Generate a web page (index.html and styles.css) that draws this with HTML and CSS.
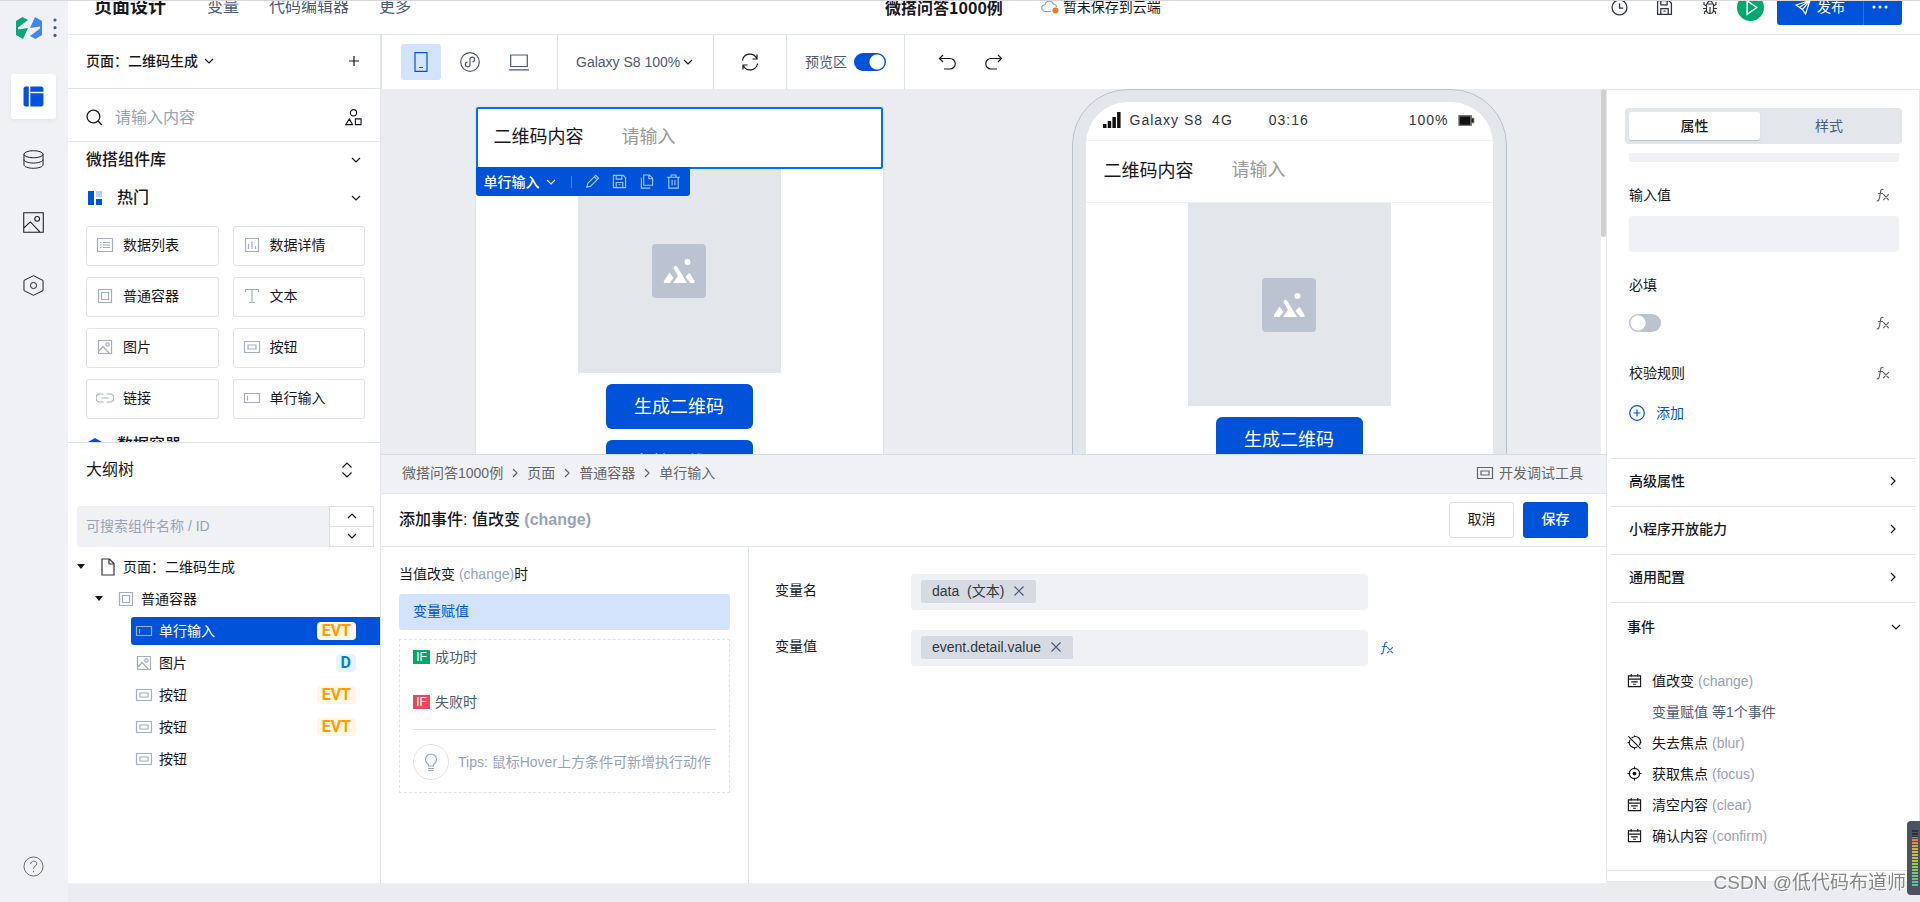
FILE: index.html
```html
<!DOCTYPE html>
<html lang="zh-CN">
<head>
<meta charset="utf-8">
<title>页面设计</title>
<link rel="stylesheet" href="styles.css">
</head>
<body>
<svg class="sprite" aria-hidden="true">
  <symbol id="i-down" viewBox="0 0 10 10"><path d="M1 3l4 4 4-4"/></symbol>
  <symbol id="i-up" viewBox="0 0 10 10"><path d="M1 7l4-4 4 4"/></symbol>
  <symbol id="i-right" viewBox="0 0 10 10"><path d="M3 1l4 4-4 4"/></symbol>
  <symbol id="i-close" viewBox="0 0 12 12"><path d="M1.500 1.500l9 9M10.500 1.500l-9 9"/></symbol>
  <symbol id="i-list" viewBox="0 0 18 16"><path d="M1.500 1.500h15v13h-15zM4 5.500h1.500M4 8h1.500M4 10.500h1.500M7 5.500h7M7 8h7M7 10.500h7"/></symbol>
  <symbol id="i-chart" viewBox="0 0 18 16"><path d="M2.500 1.500h13v13h-13zM5.500 7v5M9 4.500V12M12.500 9v3"/></symbol>
  <symbol id="i-box" viewBox="0 0 18 16"><path d="M2.500 1.500h13v13h-13zM5.500 4.500h7v7h-7z"/></symbol>
  <symbol id="i-text" viewBox="0 0 18 16"><path d="M2.500 4V1.500h13V4M9 1.500v13M6 14.500h6"/></symbol>
  <symbol id="i-image" viewBox="0 0 18 16"><path d="M2.500 1.500h13v13h-13zM3 12l4-4.500 6.500 7"/><circle cx="11.500" cy="5.500" r="1.700"/></symbol>
  <symbol id="i-button" viewBox="0 0 18 16"><path d="M1.500 2.500h15v11h-15zM5 6h8v4H5z"/></symbol>
  <symbol id="i-link" viewBox="0 0 18 16"><path d="M7.500 4H4a4 4 0 000 8h3.500M10.500 4H14a4 4 0 010 8h-3.500M5.500 8h7"/></symbol>
  <symbol id="i-input" viewBox="0 0 18 16"><path d="M1.500 3.500h15v9h-15zM4.500 6v4.500"/></symbol>
  <symbol id="i-fx" viewBox="0 0 14 14"><path d="M7.500 1.600C5.800.8 5 1.500 4.700 3.200L3.300 10.500C3 12.400 2.300 13.200.8 12.600M2 5.500h5M7.200 6.200l5.600 6M12.800 6.200l-5.600 6"/></symbol>
  <symbol id="i-floppy" viewBox="0 0 16 16"><path d="M1.500 1.500h10.500l2.500 2.500v10.500h-13zM4.500 1.500v4h6v-4M4.500 14.500V9h7v5.500M7 11.500h2"/></symbol>
  <symbol id="i-calendar" viewBox="0 0 16 16"><path d="M1.500 3h13v11.500h-13zM1.500 6.500h13M4.500 1v3M11.500 1v3M4.500 9.500h7M6.500 12h3"/></symbol>
  <symbol id="i-focus" viewBox="0 0 16 16"><circle cx="8" cy="8" r="5.500"/><path d="M8 .5v3M8 12.500v3M.5 8h3M12.500 8h3"/><circle class="solid" cx="8" cy="8" r="2"/></symbol>
  <symbol id="i-blur" viewBox="0 0 16 16"><path d="M5 3.200a5.500 5.500 0 017.800 7.800M11 12.600A5.500 5.500 0 013.400 5M8 .5v2M8 13.500v2M.5 8h2M13.500 8h2M1.500 1.500l13 13"/></symbol>
  <symbol id="i-picture" viewBox="0 0 54 54"><rect class="tile" width="54" height="54" rx="4"/><g class="white"><circle cx="35.500" cy="18" r="3"/><path d="M22 22.500q1.500-1.500 3 0L35 39H21l5-7-4.500-8zM17.500 28.500l4 5.500-4 5h-5q-1.500-.5-.500-2zM33.500 33l3-3.500q.8-.8 1.500 0l4.500 7.500q.5 2-1 2h-3z"/></g></symbol>
</svg>

<div class="app">
  <nav class="rail" aria-label="主导航">
    <div class="rail-top">
      <svg class="logo" viewBox="0 0 26 22"><path fill="#07a876" d="M6.500 0L12 3 2 10.500v2L12 11 7 22 0 18V4z"/><path fill="#4285ee" d="M19.500 22L14 19l10-7.500v-2L14 11l5-11 7 4v14z"/></svg>
      <svg class="dots" viewBox="0 0 4 20"><circle cx="2" cy="2" r="1.600"/><circle cx="2" cy="9.700" r="1.600"/><circle cx="2" cy="17.400" r="1.600"/></svg>
    </div>
    <button class="rail-item active" aria-label="页面"><svg viewBox="0 0 20 20"><path class="solid" d="M2 .5h3.500v19H2L.5 18V2zM7 .5h11L19.500 2v3.500H7zM7 7h12.500v11L18 19.500H7z"/></svg></button>
    <button class="rail-item" aria-label="数据源"><svg viewBox="0 0 22 20"><ellipse cx="11" cy="4.500" rx="10" ry="3.700"/><path d="M1 4.500v11c0 2 4.500 3.700 10 3.700s10-1.700 10-3.700v-11M1 10c0 2 4.500 3.700 10 3.700S21 12 21 10"/></svg></button>
    <button class="rail-item" aria-label="素材"><svg viewBox="0 0 20 20"><path d="M.7.700h18.600v18.600H.7zM1 15l6-5.500 9 9.500"/><circle cx="13.500" cy="6.500" r="2.300"/></svg></button>
    <button class="rail-item" aria-label="设置"><svg viewBox="0 0 22 22"><path d="M11 .7l10 5v10.600l-10 5-10-5V5.700z"/><circle cx="11" cy="11" r="3.200"/></svg></button>
    <button class="rail-item help" aria-label="帮助"><svg viewBox="0 0 22 22"><circle cx="11" cy="11" r="10"/><path d="M8 8.500c0-4 6.500-4 6.500-.5 0 2.500-3.500 2.500-3.500 5.500M11 15.500v1.500"/></svg></button>
  </nav>

  <div class="main">
    <header class="topbar">
      <div class="topbar-row">
        <nav class="top-nav"><a class="current" href="#">页面设计</a><a href="#">变量</a><a href="#">代码编辑器</a><a href="#">更多</a></nav>
        <div class="top-title"><strong>微搭问答1000例</strong>
          <span class="save-state"><svg viewBox="0 0 18 14"><path d="M10 11.500H4.500a3.500 3.500 0 01-.5-7 4.500 4.500 0 018.500-.5q3 .5 3 3"/><circle cx="14.500" cy="10.500" r="3"/></svg>暂未保存到云端</span></div>
        <div class="top-actions">
          <button aria-label="历史"><svg viewBox="0 0 16 16"><circle cx="8" cy="8" r="7"/><path d="M8 4v4.500h3.500"/></svg></button>
          <button aria-label="保存"><svg><use href="#i-floppy"/></svg></button>
          <button aria-label="调试"><svg class="bug" viewBox="0 0 16 16"><path d="M4.500 5h7v6q0 3.500-3.500 3.500T4.500 11zM5.500 5q0-3 2.500-3t2.500 3M8 8v6M2 3v2.500l2.500 1.500M14 3v2.500L11.500 7M1 9.500h3.500M11.500 9.500H15M2.500 15v-2l2-1.500M13.500 15v-2l-2-1.500"/></svg></button>
          <button class="run" aria-label="预览"><svg viewBox="0 0 28 28"><path d="M10.500 7v14l10-7z"/></svg></button>
          <div class="publish"><button><svg viewBox="0 0 16 16"><path d="M1 6l14-4.500L10.500 15l-3-4.500zM7.500 10.500L15 1.500 4 8.500"/></svg>发布</button><button class="more" aria-label="更多操作"><svg viewBox="0 0 16 4"><circle cx="2" cy="2" r="1.500"/><circle cx="8" cy="2" r="1.500"/><circle cx="14" cy="2" r="1.500"/></svg></button></div>
        </div>
      </div>
    </header>

    <div class="editor">
      <aside class="left">
        <div class="page-head"><button class="page-pick">页面：二维码生成<svg class="chev"><use href="#i-down"/></svg></button><button aria-label="新建"><svg class="plus" viewBox="0 0 12 12"><path d="M6 1v10M1 6h10"/></svg></button></div>
        <section class="library">
          <div class="lib-search"><svg viewBox="0 0 16 16"><circle cx="7" cy="7" r="6"/><path d="M11.500 11.500L15 15"/></svg><input type="text" aria-label="搜索组件" placeholder="请输入内容"><svg viewBox="0 0 18 18"><circle cx="9" cy="4" r="3.300"/><path d="M4.500 10.500l-3.500 6h7zM11 10.500h6v6h-6z"/></svg></div>
          <div class="lib-title"><span>微搭组件库</span><svg class="chev"><use href="#i-down"/></svg></div>
          <div class="lib-title group"><svg class="hot" viewBox="0 0 14 14"><path fill="#0052d9" d="M0 0h6v14H0zM8 8h6v6H8z"/><path fill="#bbd3fb" d="M8 0h6v6H8z"/></svg><span>热门</span><svg class="chev"><use href="#i-down"/></svg></div>
          <div class="comp-grid">
            <button><svg><use href="#i-list"/></svg>数据列表</button><button><svg><use href="#i-chart"/></svg>数据详情</button>
            <button><svg><use href="#i-box"/></svg>普通容器</button><button><svg><use href="#i-text"/></svg>文本</button>
            <button><svg><use href="#i-image"/></svg>图片</button><button><svg><use href="#i-button"/></svg>按钮</button>
            <button><svg><use href="#i-link"/></svg>链接</button><button><svg><use href="#i-input"/></svg>单行输入</button>
          </div>
          <div class="lib-title group next"><svg class="hot" viewBox="0 0 14 14"><path fill="#0052d9" d="M7 0l7 4v6l-7 4-7-4V4z"/></svg><span>数据容器</span></div>
        </section>
        <section class="outline">
          <div class="outline-head"><span>大纲树</span><svg viewBox="0 0 12 16"><path d="M1.500 5.500L6 1l4.500 4.500M1.500 10.500L6 15l4.500-4.500"/></svg></div>
          <div class="outline-search"><input type="text" aria-label="搜索大纲树" placeholder="可搜索组件名称 / ID"><div class="stepper"><button aria-label="上一个"><svg class="chev"><use href="#i-up"/></svg></button><button aria-label="下一个"><svg class="chev"><use href="#i-down"/></svg></button></div></div>
          <ul class="tree">
            <li><i class="caret"></i><svg class="file" viewBox="0 0 18 18"><path d="M3 1h7.500L15 5.500V17H3zM10 1v5h5"/></svg>页面：二维码生成</li>
            <li class="l1"><i class="caret"></i><svg><use href="#i-box"/></svg>普通容器</li>
            <li class="l2 selected"><svg><use href="#i-input"/></svg>单行输入<b class="evt">EVT</b></li>
            <li class="l2"><svg><use href="#i-image"/></svg>图片<b class="data">D</b></li>
            <li class="l2"><svg><use href="#i-button"/></svg>按钮<b class="evt">EVT</b></li>
            <li class="l2"><svg><use href="#i-button"/></svg>按钮<b class="evt">EVT</b></li>
            <li class="l2"><svg><use href="#i-button"/></svg>按钮</li>
          </ul>
        </section>
      </aside>

      <div class="work">
        <div class="toolbar">
          <div class="tool-group devices">
            <button class="on" aria-label="手机"><svg viewBox="0 0 20 20"><path d="M4 .7h12v18.600H4zM8 15.500h4"/></svg></button>
            <button aria-label="小程序"><svg viewBox="0 0 20 20"><circle cx="10" cy="10" r="9.300"/><path d="M7.500 10.200a2.300 2.300 0 102.500 2.500V7.300a2.300 2.300 0 112.500 2.500"/></svg></button>
            <button aria-label="电脑"><svg viewBox="0 0 20 20"><path d="M1.700 3h16.600v11.500H1.700zM0 17.800h20"/></svg></button>
          </div>
          <div class="tool-group"><button class="zoom">Galaxy S8 100%<svg class="chev"><use href="#i-down"/></svg></button></div>
          <div class="tool-group reload"><button aria-label="刷新"><svg viewBox="0 0 18 18"><path d="M1.500 7.500a7.500 7.500 0 0114-2.500M16.500 10.500a7.500 7.500 0 01-14 2.500M16 1.500V6h-4.500M2 16.500V12h4.500"/></svg></button></div>
          <label class="tool-group preview">预览区<input class="switch" type="checkbox" checked></label>
          <div class="tool-group history"><button aria-label="撤销"><svg viewBox="0 0 18 18"><path d="M5 2L1.500 5.500 5 9M1.500 5.500H12a5 5 0 010 10.500H6"/></svg></button><button aria-label="重做"><svg viewBox="0 0 18 18"><path d="M13 2l3.500 3.500L13 9M16.500 5.500H6a5 5 0 000 10.500h6"/></svg></button></div>
        </div>
        <div class="center">
          <div class="canvas">
            <div class="sheet">
              <div class="field-row picked"><label for="qr-edit">二维码内容</label><input id="qr-edit" type="text" placeholder="请输入">
                <div class="pick-bar"><button class="name">单行输入<svg class="chev"><use href="#i-down"/></svg></button><i></i>
                  <button aria-label="编辑"><svg viewBox="0 0 16 16"><path d="M2 14l1-4L11.500 1.500l3 3L6 13zM10 3l3 3"/></svg></button><button aria-label="存为模板"><svg><use href="#i-floppy"/></svg></button><button aria-label="复制"><svg viewBox="0 0 16 16"><path d="M5 1h6l3.500 3.500V12H5zM10.500 1v4h4M2.500 4v11H12"/></svg></button><button aria-label="删除"><svg viewBox="0 0 16 16"><path d="M1 3.500h14M5.500 3V1h5v2M3 3.500V15h10V3.500M6.500 6.500V12M9.500 6.500V12"/></svg></button></div>
              </div>
              <div class="photo"><svg><use href="#i-picture"/></svg></div>
              <button class="cta">生成二维码</button>
              <button class="cta">存储二维码</button>
            </div>
            <div class="phone"><div class="screen">
              <div class="status"><svg class="signal" viewBox="0 0 18 16"><path d="M0 12h3.500v4H0zM4.700 9h3.500v7H4.700zM9.400 5h3.500v11H9.400zM14.100 0h3.500v16h-3.500z"/></svg><span>Galaxy S8</span><span>4G</span><span class="time">03:16</span><span class="pct">100%</span><svg class="battery" viewBox="0 0 18 12"><path fill="#777" d="M0 0h15v3h2.500v6H15v3H0z"/><path d="M1.500 1.500h11.500v9H1.500zM14.500 4h2v4h-2z"/></svg></div>
              <div class="field-row"><label for="qr-view">二维码内容</label><input id="qr-view" type="text" placeholder="请输入"></div>
              <div class="photo"><svg><use href="#i-picture"/></svg></div>
              <button class="cta">生成二维码</button>
            </div></div>
            <div class="scroll"><i></i></div>
          </div>

          <section class="events">
            <div class="crumbs"><a href="#">微搭问答1000例</a><svg class="chev"><use href="#i-right"/></svg><a href="#">页面</a><svg class="chev"><use href="#i-right"/></svg><a href="#">普通容器</a><svg class="chev"><use href="#i-right"/></svg><a href="#">单行输入</a><button class="devtool"><svg><use href="#i-button"/></svg>开发调试工具</button></div>
            <div class="event-head"><h2>添加事件: 值改变 <span>(change)</span></h2><button class="btn">取消</button><button class="btn primary">保存</button></div>
            <div class="event-body">
              <div class="flow">
                <p>当值改变 <span>(change)</span>时</p>
                <button class="step">变量赋值</button>
                <div class="branches">
                  <div class="branch"><b>IF</b>成功时</div>
                  <div class="branch fail"><b>IF</b>失败时</div>
                  <div class="tips"><span class="bulb"><svg viewBox="0 0 16 18"><path d="M5.500 13v-1.500Q2.500 9.500 2.500 6.500a5.500 5.500 0 0111 0q0 3-3 5V13zM5 15.500h6M5.500 17.500h5"/></svg></span>Tips: 鼠标Hover上方条件可新增执行动作</div>
                </div>
              </div>
              <div class="form">
                <div class="form-row"><span>变量名</span><div class="tagbox"><div class="tag">data&nbsp; (文本)<button aria-label="移除"><svg><use href="#i-close"/></svg></button></div></div></div>
                <div class="form-row"><span>变量值</span><div class="tagbox"><div class="tag">event.detail.value<button aria-label="移除"><svg><use href="#i-close"/></svg></button></div></div><button class="fx blue" aria-label="表达式"><svg><use href="#i-fx"/></svg></button></div>
              </div>
            </div>
          </section>
        </div>
      </div>

      <aside class="props">
        <div class="tabs" role="tablist"><button class="on" role="tab" aria-selected="true">属性</button><button role="tab" aria-selected="false">样式</button></div>
        <div class="props-body">
          <div class="stub"></div>
          <div class="prop"><label for="val">输入值</label><button class="fx" aria-label="表达式"><svg><use href="#i-fx"/></svg></button></div>
          <input id="val" class="value" type="text">
          <div class="prop req"><label for="need">必填</label></div>
          <div class="prop toggle"><input id="need" class="switch" type="checkbox"><button class="fx" aria-label="表达式"><svg><use href="#i-fx"/></svg></button></div>
          <div class="prop rule"><span>校验规则</span><button class="fx" aria-label="表达式"><svg><use href="#i-fx"/></svg></button></div>
          <button class="add"><svg viewBox="0 0 16 16"><circle cx="8" cy="8" r="7.300"/><path d="M8 4.500v7M4.500 8h7"/></svg>添加</button>
        </div>
        <button class="fold">高级属性<svg class="chev"><use href="#i-right"/></svg></button>
        <button class="fold">小程序开放能力<svg class="chev"><use href="#i-right"/></svg></button>
        <button class="fold">通用配置<svg class="chev"><use href="#i-right"/></svg></button>
        <button class="fold open">事件<svg class="chev"><use href="#i-down"/></svg></button>
        <ul class="event-list">
          <li><svg><use href="#i-calendar"/></svg>值改变 <span>(change)</span></li>
          <li class="sub">变量赋值 等1个事件</li>
          <li><svg><use href="#i-blur"/></svg>失去焦点 <span>(blur)</span></li>
          <li><svg><use href="#i-focus"/></svg>获取焦点 <span>(focus)</span></li>
          <li><svg><use href="#i-calendar"/></svg>清空内容 <span>(clear)</span></li>
          <li><svg><use href="#i-calendar"/></svg>确认内容 <span>(confirm)</span></li>
        </ul>
      </aside>
    </div>
  </div>
</div>
<div class="watermark">CSDN @低代码布道师</div>
<div class="meter"><i></i></div>
</body>
</html>
```
FILE: styles.css
```css
* { box-sizing: border-box; }
body { margin: 0; color: #16181d; background: #ebecf0; font: 14px/20px "Liberation Sans", "Noto Sans CJK SC", sans-serif; }
button { display: flex; align-items: center; justify-content: center; margin: 0; padding: 0; border: 0; background: none; color: inherit; font: inherit; white-space: nowrap; }
input { min-width: 0; margin: 0; padding: 0; border: 0; background: none; color: inherit; font: inherit; }
input::placeholder { color: #97a3b7; opacity: 1; }
a { color: inherit; text-decoration: none; }
ul { margin: 0; padding: 0; list-style: none; }
svg { flex: none; fill: none; stroke: currentColor; stroke-width: 1.2; }
.solid { fill: currentColor; stroke: none; }
.sprite { position: absolute; width: 0; height: 0; }
.chev { width: 10px; height: 10px; stroke-width: 1.2; }

.app { display: grid; grid-template-columns: 68px minmax(0, 1fr); height: 100vh; overflow: hidden; border-top: 1px solid #d8d9dc; }

.rail { display: flex; flex-direction: column; align-items: center; gap: 18px; padding: 15px 2px 13px 0; background: #f0f1f5; }
.rail-top { display: flex; align-items: center; gap: 11px; height: 24px; margin: 0 0 16px 6px; }
.logo { width: 26px; height: 22px; stroke: none; }
.dots { width: 4px; height: 20px; fill: #4b5b76; stroke: none; }
.rail-item { width: 45px; height: 45px; border-radius: 3px; }
.rail-item svg { width: 21px; height: 21px; stroke-width: 1; }
.rail-item.active { background: #fff; color: #0052d9; box-shadow: 0 2px 4px #0000000d; }
.rail-item.help { margin-top: auto; color: #666; }

.main { display: flex; flex-direction: column; min-width: 0; min-height: 0; padding-bottom: 19px; }
.topbar { display: flex; align-items: flex-end; height: 34px; overflow: hidden; background: #fff; border-bottom: 1px solid #e3e6eb; }
.topbar-row { display: grid; grid-template-columns: 1fr auto 1fr; align-items: center; flex: 1; height: 54px; padding: 0 18px 0 26px; }
.top-nav { display: flex; align-items: center; gap: 30px; color: #4b5b76; font-size: 16px; }
.top-nav .current { margin-right: 11px; color: #16181d; font-size: 18px; font-weight: bold; }
.top-title { display: flex; align-items: center; gap: 38px; padding-left: 50px; font-size: 16px; }
.top-title strong { font-family: "Noto Sans CJK SC", sans-serif; }
.save-state { display: flex; align-items: center; gap: 4px; font-size: 14px; }
.save-state svg { width: 18px; height: 14px; stroke: #97a3b7; }
.save-state circle { fill: #ed7b2f; stroke: none; }
.top-actions { display: flex; align-items: center; justify-content: flex-end; color: #33363d; }
.top-actions > button { width: 45px; }
.top-actions > button svg { width: 17px; height: 17px; }
.top-actions > button .bug { width: 16px; height: 16px; }
.top-actions > .run { width: 27px; height: 27px; margin: 0 13px 0 5px; border-radius: 50%; background: #00a870; color: #fff; }
.top-actions > .run svg { width: 27px; height: 27px; stroke-width: 1.5; }
.publish { display: flex; height: 36px; border-radius: 3px; background: #0052d9; color: #fff; }
.publish button { width: 86px; gap: 6px; }
.publish svg { width: 16px; height: 16px; }
.publish .more { width: 39px; padding-right: 6px; border-left: 1px solid #2a6de0; }
.publish .more svg { height: 4px; fill: #fff; stroke: none; }

.editor { display: grid; grid-template-columns: 313px minmax(0, 1fr) 314px; grid-template-rows: 54px minmax(0, 1fr); flex: 1; min-height: 0; }
.left { grid-row: 1 / 3; display: flex; flex-direction: column; min-height: 0; background: #fff; border-right: 1px solid #e3e6eb; }
.work { display: contents; }
.toolbar { grid-column: 2 / 4; display: flex; background: #fff; border-left: 1px solid #dcdfe6; }
.center { display: flex; flex-direction: column; min-width: 0; min-height: 0; }

.page-head { display: flex; align-items: center; justify-content: space-between; flex: none; height: 54px; padding: 0 20px 2px 18px; border-bottom: 1px solid #dfe2e8; }
.page-pick { gap: 6px; font-weight: 500; }
.plus { width: 12px; height: 12px; }
.library { flex: 353 1 0; min-height: 0; overflow: hidden; }
.lib-search { display: flex; align-items: center; gap: 12px; height: 53px; padding: 5px 18px 0; border-bottom: 1px solid #e3e6eb; font-size: 16px; }
.lib-search svg { width: 17px; height: 17px; }
.lib-search input { flex: 1; height: 26px; }
.lib-title { display: flex; align-items: center; justify-content: space-between; height: 36px; padding: 0 19px 0 18px; font-size: 16px; font-weight: 500; }
.group { height: 40px; }
.hot { width: 14px; height: 14px; margin: 0 15px 0 2px; stroke: none; }
.group span { flex: 1; }
.next { margin-top: 6px; }
.comp-grid { display: grid; grid-template-columns: 1fr 1fr; gap: 11px 14px; padding: 8px 15px 0 18px; }
.comp-grid button { justify-content: flex-start; gap: 9px; height: 40px; padding: 0 9px 2px; border: 1px solid #e0e3e9; border-radius: 3px; }
.comp-grid svg, .tree svg { width: 18px; height: 16px; color: #a3aec1; }
.outline { flex: 441 1 0; min-height: 0; border-top: 1px solid #dfe2e8; }
.outline-head { display: flex; align-items: center; justify-content: space-between; height: 55px; padding: 0 27px 0 18px; font-size: 16px; }
.outline-head svg { width: 12px; height: 16px; }
.outline-search { display: flex; height: 41px; margin: 8px 6px 0 9px; }
.outline-search input { flex: 1; padding: 0 9px; border-radius: 3px 0 0 3px; background: #f0f1f5; }
.stepper { display: grid; grid-template-rows: 1fr 1fr; width: 45px; border: 1px solid #dcdfe6; }
.stepper button + button { border-top: 1px solid #dcdfe6; }
.tree { display: grid; gap: 4px; padding-top: 6px; }
.tree li { display: flex; align-items: center; gap: 6px; height: 28px; padding-left: 9px; }
.tree .l1 { padding-left: 27px; }
.tree .l2 { margin-left: 63px; padding: 0 24px 0 4px; }
.tree .selected { border-radius: 3px 0 0 3px; background: #0052d9; color: #fff; }
.tree .file { height: 18px; color: #33363d; }
.caret { width: 8px; margin-right: 8px; border: 4px solid transparent; border-top: 5px solid #16181d; border-bottom: 0; }
.tree b { margin-left: auto; padding: 0 5px; border-radius: 4px; background: #fff6e8; color: #ff9d00; font: bold 16px/18px Roboto, sans-serif; }
.tree .data { background: #e8f4fb; color: #0084d6; }

.tool-group { display: flex; align-items: center; padding: 0 18px; border-right: 1px solid #dcdfe6; color: #4b5b76; }
.devices { gap: 9px; padding: 0 18px 0 19px; }
.devices button { width: 40px; height: 36px; border-radius: 3px; }
.devices .on { background: #d4e3fc; color: #0052d9; }
.devices svg { width: 20px; height: 20px; }
.zoom { gap: 3px; }
.zoom .chev { color: #16181d; }
.toolbar .tool-group:nth-child(2) { width: 156px; }
.reload { width: 73px; justify-content: center; color: #16181d; }
.reload svg, .history svg { width: 18px; height: 18px; }
.preview { gap: 7px; }
.history { gap: 29px; padding-left: 33px; border: 0; color: #16181d; }
.switch { flex: none; width: 32px; height: 18px; appearance: none; border-radius: 9px; background: #bbc3d0 radial-gradient(circle at 9px 9px, #fff 7px, transparent 8px); }
.switch:checked { background: #0052d9 radial-gradient(circle at 23px 9px, #fff 7px, transparent 8px); }

.canvas { position: relative; display: flex; align-items: flex-start; justify-content: space-around; flex: 366 1 0; min-height: 0; overflow: hidden; padding-right: 5px; background: #ebecf0; }
.sheet { display: flex; flex-direction: column; align-items: center; width: 407px; margin-top: 18px; padding-bottom: 60px; background: #fff; box-shadow: 0 0 2px #0000001a; font-size: 18px; }
.field-row { display: flex; align-items: center; align-self: stretch; height: 62px; padding: 0 18px 2px; }
.field-row label { width: 128px; }
.field-row input { flex: 1; height: 30px; }
.field-row input::placeholder { color: #9a9a9a; }
.picked { position: relative; border: 2px solid #006eff; border-radius: 2px; padding: 0 16px 2px; }
.pick-bar { position: absolute; top: 100%; left: -2px; display: flex; align-items: center; height: 29px; padding: 0 9px 0 8px; gap: 12px; border-radius: 0 0 3px 3px; background: #0052d9; color: #a3c4f9; font-size: 14px; }
.pick-bar svg { width: 15px; height: 15px; }
.pick-bar .name { gap: 6px; color: #fff; font-weight: 500; }
.pick-bar .chev { width: 10px; height: 10px; }
.pick-bar i { width: 1px; height: 12px; margin: 0 1px 0 3px; background: #4d86e4; }
.photo { display: flex; align-items: center; justify-content: center; width: 203px; height: 203px; margin-bottom: 11px; background: #e3e6eb; }
.photo svg { width: 54px; height: 54px; }
.picked + .photo { height: 204px; }
.tile { fill: #bbc3d0; stroke: none; }
.white { fill: #fff; stroke: none; }
.cta { width: 147px; height: 45px; margin-bottom: 11px; border-radius: 6px; background: #0052d9; color: #fff; font-size: 18px; }
.phone { width: 435px; height: 900px; padding: 12px 13px; border: 1px solid #bbc3d0; border-radius: 56px; background: #e3e6eb; }
.screen { display: flex; flex-direction: column; align-items: center; height: 100%; overflow: hidden; border-radius: 42px; background: #fff; font-size: 18px; }
.status { display: flex; align-items: center; align-self: stretch; gap: 9px; height: 39px; padding: 0 18px 2px 17px; border-bottom: 1px solid #f0f1f3; color: #33363d; font-size: 14px; letter-spacing: 1px; }
.status svg { fill: #111; stroke: none; }
.signal { width: 18px; height: 16px; }
.status .time { margin-left: 27px; }
.status .pct { margin-left: auto; }
.battery { width: 17px; height: 11px; }
.screen .field-row { border-bottom: 1px solid #f0f1f3; }
.scroll { position: absolute; top: 0; right: 0; bottom: 0; width: 5px; background: #fff; }
.scroll i { display: block; width: 5px; height: 148px; border-radius: 3px; background: #d0d0d0; }

.events { display: flex; flex-direction: column; flex: 429 1 0; min-height: 0; background: #fff; border-top: 1px solid #d5dae3; }
.crumbs { display: flex; align-items: center; gap: 7px; height: 39px; padding: 0 23px 2px 21px; background: #f0f1f5; border-bottom: 1px solid #e3e6eb; color: #666; }
.devtool { gap: 5px; margin-left: auto; }
.devtool svg { width: 18px; height: 16px; }
.event-head { display: flex; align-items: center; gap: 9px; height: 53px; padding: 0 18px; border-bottom: 1px solid #e3e6eb; }
.event-head h2 { flex: 1; margin: 0; font-size: 16px; font-weight: 500; }
.event-head h2 span { color: #97a3b7; font-weight: bold; }
.btn { width: 65px; height: 36px; padding-bottom: 2px; border: 1px solid #dcdfe6; border-radius: 3px; }
.primary { border-color: #0052d9; background: #0052d9; color: #fff; font-weight: 500; }
.event-body { display: grid; grid-template-columns: 368px minmax(0, 1fr); flex: 1; }
.flow { padding: 17px 18px 0; border-right: 1px solid #e3e6eb; }
.flow p { margin: 0 0 10px; }
.flow p span { color: #97a3b7; }
.step { justify-content: flex-start; width: 100%; height: 36px; padding: 0 14px 2px; border-radius: 3px; background: #d4e3fc; color: #0052d9; }
.branches { height: 154px; margin-top: 9px; padding: 0 13px; border: 1px dashed #dfe2e8; }
.branch { display: flex; align-items: center; gap: 5px; height: 34px; color: #4b5b76; }
.branch + .branch { margin-top: 11px; }
.branch b { width: 17px; height: 14px; background: #00a870; color: #fff; font-size: 12px; font-weight: normal; line-height: 14px; text-align: center; }
.branch.fail b { background: #e34d59; }
.tips { display: flex; align-items: center; gap: 9px; margin-top: 10px; padding-top: 14px; border-top: 1px solid #dfe2e8; color: #97a3b7; white-space: nowrap; }
.bulb { display: grid; place-items: center; width: 36px; height: 36px; border: 1px solid #dfe2e8; border-radius: 50%; }
.bulb svg { width: 16px; height: 18px; }
.form { display: grid; align-content: start; gap: 20px; padding: 27px 0 0 26px; }
.form-row { display: flex; align-items: center; }
.form-row > span { width: 136px; padding-bottom: 5px; }
.tagbox { display: flex; align-items: center; width: 457px; height: 36px; padding: 0 0 2px 10px; border-radius: 3px; background: #f0f1f5; }
.tag { display: flex; align-items: center; gap: 9px; height: 23px; padding: 0 11px; border-radius: 2px; background: #d5dae3; color: #33363d; }
.tag svg { width: 12px; height: 12px; color: #4b5b76; }
.fx { color: #666; }
.fx svg { width: 14px; height: 14px; }
.fx.blue { margin-left: 12px; color: #2b6ce6; }

.props { display: flex; flex-direction: column; min-height: 0; margin-bottom: 1px; background: #fff; border: 1px solid #e3e6eb; }
.tabs { display: grid; grid-template-columns: 131px 1fr; height: 36px; margin: 18px 17px 9px 18px; padding: 4px; border-radius: 4px; background: #e3e6eb; color: #4b5b76; }
.tabs .on { border-radius: 2px; background: #fff; color: #16181d; font-weight: 500; box-shadow: 0 1px 1px #bbc3d0; }
.props-body { height: 305px; padding: 0 20px 0 22px; }
.stub { height: 9px; border-radius: 0 0 3px 3px; background: #f0f1f5; }
.prop { display: flex; align-items: center; justify-content: space-between; height: 24px; margin-top: 21px; padding-right: 9px; }
.value { display: block; width: 100%; height: 36px; margin-top: 9px; padding: 0 10px; border-radius: 3px; background: #f0f1f5; }
.prop.toggle { margin-top: 14px; }
.prop.rule { margin-top: 26px; }
.add { gap: 11px; margin-top: 18px; color: #0052d9; }
.add svg { width: 16px; height: 16px; }
.fold { flex: none; justify-content: space-between; height: 48px; margin: 0 3px 0 4px; padding: 0 18px 3px; border-top: 1px solid #e3e6eb; font-weight: 500; }
.fold.open { padding: 0 15px 0 16px; }
.event-list { display: grid; grid-auto-rows: 31px; align-content: start; flex: 1; margin-bottom: 10px; padding: 15px 20px; border-bottom: 1px solid #e3e6eb; }
.event-list li { display: flex; align-items: center; gap: 4px; }
.event-list svg { width: 15px; height: 15px; margin-right: 6px; }
.event-list span { color: #97a3b7; }
.event-list .sub { padding-left: 25px; color: #4b5b76; }

.watermark { position: fixed; right: 14px; bottom: 4px; color: #888; font-size: 19px; line-height: 30px; text-shadow: 1px 1px 1px #fff; }
.meter { position: fixed; right: 0; bottom: 7px; width: 13px; height: 74px; padding: 9px 2px 9px 5px; border-radius: 4px 0 0 4px; background: #4d5160; }
.meter i { display: block; height: 100%; background: repeating-linear-gradient(transparent 0 2px, #4d5160 2px 3px), linear-gradient(#2d303a 12%, #e36a4c 13%, #d9b545 35%, #a9c94f 55%, #49c3a6); }
```
